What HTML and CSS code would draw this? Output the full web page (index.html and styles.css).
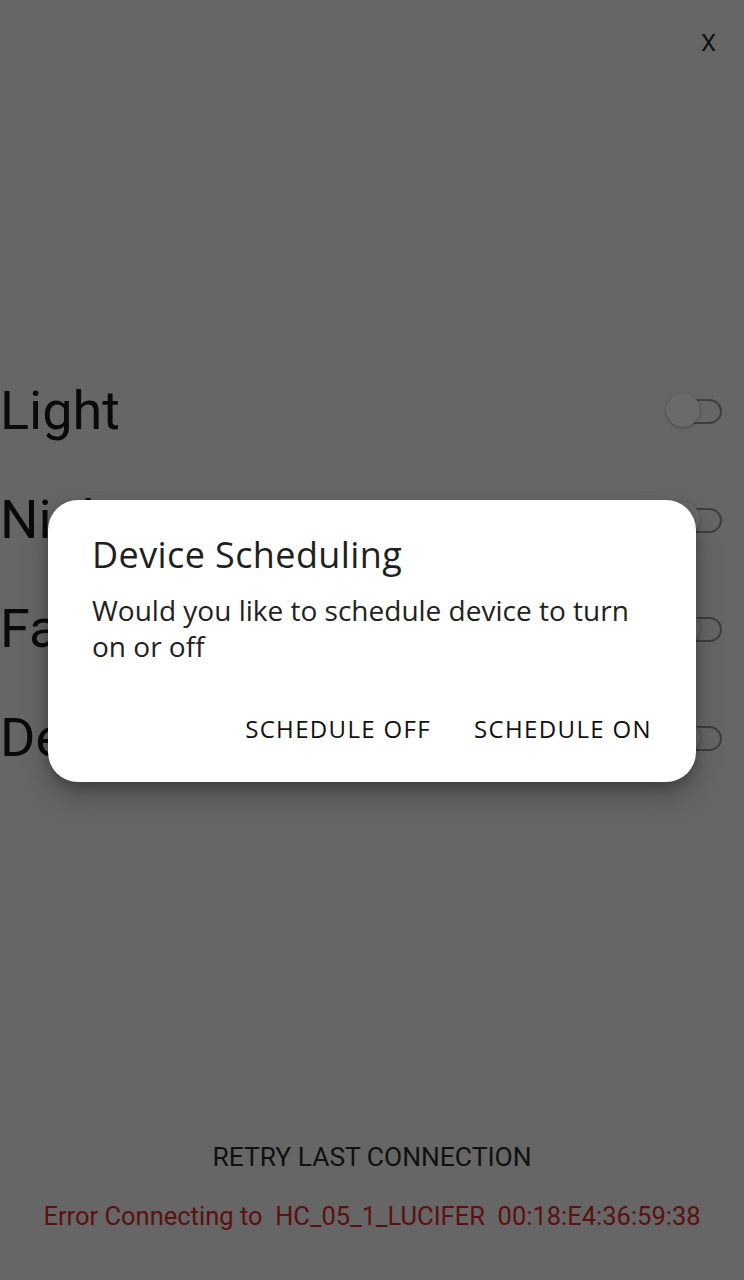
FILE: index.html
```html
<!DOCTYPE html>
<html>
<head>
<meta charset="utf-8">
<link rel="stylesheet" href="styles.css">
</head>
<body>
<div class="screen">
  <div class="topbar"><span class="close">X</span></div>
  <div class="list">
    <div class="row"><span class="label">Light</span><span class="switch"><span class="thumb"></span></span></div>
    <div class="row"><span class="label">Night Lamp</span><span class="switch"><span class="thumb"></span></span></div>
    <div class="row"><span class="label">Fan</span><span class="switch"><span class="thumb"></span></span></div>
    <div class="row"><span class="label">Desk</span><span class="switch"><span class="thumb"></span></span></div>
  </div>
  <div class="spacer"></div>
  <div class="bottom">
    <div class="retry">RETRY LAST CONNECTION</div>
    <div class="error">Error Connecting to&nbsp; HC_05_1_LUCIFER&nbsp; 00:18:E4:36:59:38</div>
  </div>
  <div class="dialog">
    <div class="dtitle">Device Scheduling</div>
    <div class="dbody">Would you like to schedule device to turn on or off</div>
    <div class="dactions">
      <span class="dbtn">SCHEDULE OFF</span>
      <span class="dbtn">SCHEDULE ON</span>
    </div>
  </div>
</div>
</body>
</html>
```
FILE: styles.css
```css
html, body {
  margin: 0;
  padding: 0;
  background: #666666;
}
.screen {
  position: relative;
  width: 744px;
  height: 1280px;
  display: flex;
  flex-direction: column;
  font-family: Roboto, "Liberation Sans", sans-serif;
  color: #000;
  overflow: hidden;
}
.topbar {
  height: 86px;
  display: flex;
  justify-content: flex-end;
  align-items: flex-start;
}
.close {
  font-size: 24px;
  color: #111;
  margin-top: 29px;
  margin-right: 28px;
  line-height: 28px;
}
.list {
  margin-top: 270px;
  display: flex;
  flex-direction: column;
}
.row {
  height: 109px;
  display: flex;
  align-items: center;
  justify-content: space-between;
  padding: 0 22px 0 0;
}
.label {
  font-size: 54px;
  line-height: 64px;
  color: #0a0a0a;
  white-space: nowrap;
}
.switch {
  position: relative;
  width: 56px;
  height: 36px;
  display: flex;
  align-items: center;
}
.switch::before {
  content: "";
  position: absolute;
  left: 16px;
  right: 0;
  top: 6px;
  height: 25px;
  border: 2px solid #3e3e3e;
  border-radius: 14px;
  box-sizing: border-box;
}
.thumb {
  position: absolute;
  left: 0;
  top: 0;
  width: 34px;
  height: 34px;
  border-radius: 50%;
  background: #6a6a6a;
  box-shadow: 0 1px 3px rgba(0,0,0,0.35);
}
.spacer { flex: 1; }
.bottom {
  display: flex;
  flex-direction: column;
  align-items: center;
  padding-bottom: 49px;
}
.retry {
  font-size: 26.4px;
  color: #111;
  line-height: 30px;
  margin-bottom: 29px;
}
.error {
  font-size: 25.5px;
  color: #5c1010;
  line-height: 30px;
  white-space: pre;
}
.dialog {
  position: absolute;
  left: 48px;
  top: 500px;
  width: 648px;
  height: 282px;
  box-sizing: border-box;
  background: #fff;
  border-radius: 30px;
  box-shadow: 0 14px 28px rgba(0,0,0,0.28), 0 4px 10px rgba(0,0,0,0.18);
  padding: 34px 44px 0 44px;
  font-family: "Open Sans", Inter, sans-serif;
  display: flex;
  flex-direction: column;
}
.dtitle {
  font-size: 36px;
  line-height: 42px;
  color: #1f1f1f;
  letter-spacing: 0.4px;
}
.dbody {
  font-size: 28px;
  line-height: 36px;
  color: #222;
  margin-top: 16px;
}
.dactions {
  display: flex;
  justify-content: flex-end;
  gap: 43px;
  margin-top: 50px;
}
.dbtn {
  font-size: 24px;
  color: #111;
  line-height: 30px;
  letter-spacing: 1.35px;
}
```
